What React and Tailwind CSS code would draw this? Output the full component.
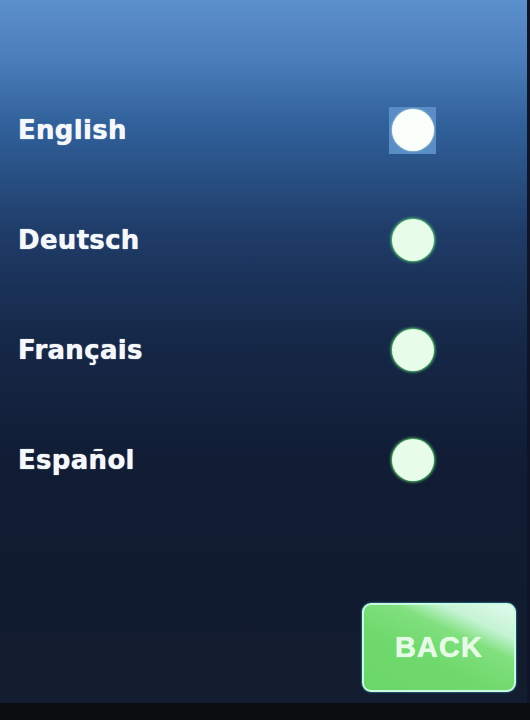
import React from "react";

const langs = ["English", "Deutsch", "Français", "Español"];

export default function App() {
  return (
    <div className="w-[530px] h-[720px] flex flex-col bg-[#0c0d10] overflow-hidden" style={{ fontFamily: '"DejaVu Sans", sans-serif' }}>
      <div className="h-[703px] flex flex-col bg-[linear-gradient(to_bottom,#5c90cc_0%,#4b7ebb_8%,#30609a_18%,#1f3c68_33%,#162848_48%,#111d35_65%,#111b2f_85%,#141d2f_100%)] border-r-[3px] border-[#0d1526]">
        <div className="pt-[82px] flex flex-col">
          {langs.map((l, i) => (
            <div key={l} className="h-[110px] flex items-center justify-between pl-[18px] pr-[91px]">
              <span className="text-[26px] font-bold text-[#f4f8fb] tracking-[0.3px] -mt-[14px] [text-shadow:0_0_1px_#ffffff]">{l}</span>
              <div className={`w-[47px] h-[47px] flex items-center justify-center -mt-[14px] ${i === 0 ? "bg-[#5a8dc6]" : ""}`}>
                <div className={`w-[42px] h-[42px] rounded-full ${i === 0 ? "bg-[#fbfffc] shadow-[0_0_2px_#d8ffd8]" : "bg-[#e8fde9] shadow-[0_0_3px_1px_#5fd872]"}`} />
              </div>
            </div>
          ))}
        </div>
        <div className="mt-auto flex justify-end pr-[11px] pb-[11px]">
          <div className="w-[154px] h-[89px] rounded-[9px] border-2 border-[#c8fbe0] bg-[linear-gradient(205deg,#e2faf0_0%,#c4f3d2_22%,#80e07e_36%,#70d96d_60%,#6bd669_100%)] flex items-center justify-center shadow-[0_0_2px_#3fd0ff]">
            <span className="text-[29px] font-bold text-[#e6fbe6] tracking-[1px] [text-shadow:0_0_1px_#ffffff]" style={{ fontFamily: '"Liberation Sans", sans-serif' }}>BACK</span>
          </div>
        </div>
      </div>
    </div>
  );
}
